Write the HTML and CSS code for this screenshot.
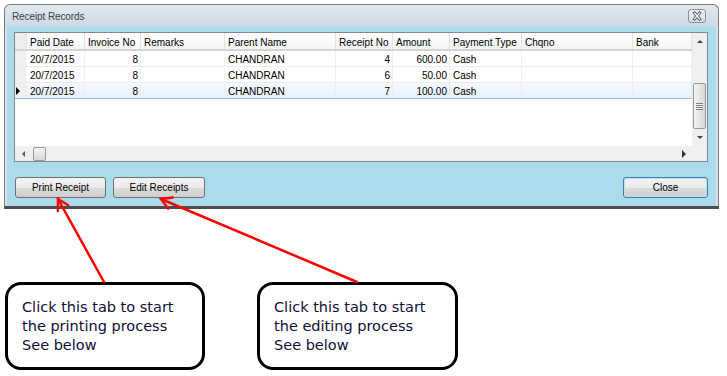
FILE: index.html
```html
<!DOCTYPE html>
<html lang="en">
<head>
    <meta charset="UTF-8">
    <title>Receipt Records</title>
    <link rel="stylesheet" href="styles.css">
</head>
<body>
<div class="page">
    <div class="window">
        <div class="titlebar">
            <span class="title">Receipt Records</span>
            <span class="close-x">
                <svg width="18" height="14" viewBox="0 0 18 14">
                    <path d="M6.5 4 L11.5 10 M11.5 4 L6.5 10" stroke="#4d5560" stroke-width="3" stroke-linecap="square"/>
                    <path d="M6.5 4 L11.5 10 M11.5 4 L6.5 10" stroke="#ffffff" stroke-width="1.2" stroke-linecap="square"/>
                </svg>
            </span>
        </div>
        <div class="client">
            <div class="grid">
                <div class="view">
                    <div class="row head">
                        <div class="cell rh"></div>
                        <div class="cell">Paid Date</div>
                        <div class="cell">Invoice No</div>
                        <div class="cell">Remarks</div>
                        <div class="cell">Parent Name</div>
                        <div class="cell">Receipt No</div>
                        <div class="cell">Amount</div>
                        <div class="cell">Payment Type</div>
                        <div class="cell">Chqno</div>
                        <div class="cell">Bank</div>
                    </div>
                    <div class="row">
                        <div class="cell rh"></div>
                        <div class="cell">20/7/2015</div>
                        <div class="cell num">8</div>
                        <div class="cell"></div>
                        <div class="cell">CHANDRAN</div>
                        <div class="cell num">4</div>
                        <div class="cell num">600.00</div>
                        <div class="cell">Cash</div>
                        <div class="cell"></div>
                        <div class="cell"></div>
                    </div>
                    <div class="row">
                        <div class="cell rh"></div>
                        <div class="cell">20/7/2015</div>
                        <div class="cell num">8</div>
                        <div class="cell"></div>
                        <div class="cell">CHANDRAN</div>
                        <div class="cell num">6</div>
                        <div class="cell num">50.00</div>
                        <div class="cell">Cash</div>
                        <div class="cell"></div>
                        <div class="cell"></div>
                    </div>
                    <div class="row selected">
                        <div class="cell rh"><span class="current"></span></div>
                        <div class="cell">20/7/2015</div>
                        <div class="cell num">8</div>
                        <div class="cell"></div>
                        <div class="cell">CHANDRAN</div>
                        <div class="cell num">7</div>
                        <div class="cell num">100.00</div>
                        <div class="cell">Cash</div>
                        <div class="cell"></div>
                        <div class="cell"></div>
                    </div>
                </div>
                <div class="vscroll">
                    <div class="sb-btn"><span class="arr up"></span></div>
                    <div class="vtrack"><div class="vthumb"><span class="grip"></span></div></div>
                    <div class="sb-btn"><span class="arr down"></span></div>
                </div>
                <div class="hscroll">
                    <div class="hbtn"><span class="arr left"></span></div>
                    <div class="hthumb"></div>
                    <div class="htrack"></div>
                    <div class="hbtn"><span class="arr right"></span></div>
                </div>
                <div class="corner"></div>
            </div>
            <div class="actions">
                <button class="btn btn-print">Print Receipt</button>
                <button class="btn btn-edit">Edit Receipts</button>
                <button class="btn btn-close">Close</button>
            </div>
        </div>
    </div>

    <div class="callouts">
        <div class="callout">Click this tab to start<br>the printing process<br>See below</div>
        <div class="callout">Click this tab to start<br>the editing process<br>See below</div>
    </div>

    <!-- pointers from the notes up to the buttons -->
    <svg class="arrows" width="727" height="376" viewBox="0 0 727 376">
        <g stroke="#ff0000" stroke-width="2.5" fill="none" stroke-linecap="round">
            <path d="M104 282 L58 199"/>
            <path d="M57.8 211 L58 199 L68.3 205.2"/>
            <path d="M357 282 L161 199"/>
            <path d="M168.2 208.6 L161 199 L172.9 197.5"/>
        </g>
    </svg>
</div>
</body>
</html>
```

FILE: styles.css
```css
body {
    margin: 0;
    background: #ffffff;
    font-family: "Liberation Sans", Arial, sans-serif;
}
.page {
    position: relative;
    width: 727px;
    height: 376px;
    overflow: hidden;
}
.window {
    margin: 4px 0 0 4px;
    width: 715px;
    box-sizing: border-box;
    border: 1px solid #787c82;
    border-bottom: 3px solid #4e4e4e;
    border-radius: 6px 6px 0 0;
    padding: 0 2px;
    background: linear-gradient(#e3e9ef, #ccd8e4 22px, #d8e0e8 22px);
}
.titlebar {
    height: 22px;
    display: flex;
    align-items: center;
    justify-content: space-between;
    padding: 0 10px 0 5px;
}
.title {
    font-size: 10px;
    letter-spacing: -0.1px;
    color: #3d4248;
}
.close-x {
    display: block;
    width: 18px;
    height: 14px;
    box-sizing: border-box;
    border: 1px solid #8c939c;
    border-radius: 3px;
    background: linear-gradient(#eef2f6, #d7dee6);
}
.close-x svg {
    display: block;
    margin: -1px;
}
.client {
    height: 179px;
    box-sizing: border-box;
    padding: 5px 8px 0 7px;
    background: #acdbeb;
}
.grid {
    width: 694px;
    height: 130px;
    box-sizing: border-box;
    border: 1px solid #828790;
    background: #ffffff;
    display: grid;
    grid-template-columns: 677px 15px;
    grid-template-rows: 113px 15px;
}
.view {
    overflow: hidden;
}
.row {
    display: grid;
    grid-template-columns: 12px 58px 56px 84px 111px 57px 57px 72px 111px 59px;
    height: 16px;
    box-sizing: border-box;
    border-bottom: 1px solid #ececec;
    font-size: 10px;
    color: #000;
}
.cell {
    padding: 2px 3px 0;
    line-height: 14px;
    white-space: nowrap;
    overflow: hidden;
    border-right: 1px solid #f0f0f0;
}
.num {
    text-align: right;
    padding-right: 2px;
}
.rh {
    padding: 0;
    background: #efefef;
    border-right: 1px solid #f8f8f8;
    display: flex;
    align-items: center;
}
.head {
    height: 18px;
    border-bottom: 2px solid #d4d4d4;
    background: linear-gradient(#ffffff, #f4f5f7);
}
.head .cell {
    padding-top: 3px;
    line-height: 14px;
    border-right: 1px solid #e3e3e3;
}
.head .rh {
    background: #ededed;
}
.selected {
    background: linear-gradient(#f4f9fe, #e8f1fb);
    border-bottom: 1px solid #8cc4f0;
}
.selected .cell {
    border-right-color: #e6eef7;
}
.current {
    display: block;
    margin-left: 1px;
    width: 0;
    height: 0;
    border-top: 4px solid transparent;
    border-bottom: 4px solid transparent;
    border-left: 4px solid #000;
}
.vscroll {
    background: #efefef;
    display: flex;
    flex-direction: column;
}
.sb-btn {
    height: 17px;
    display: flex;
    align-items: center;
    justify-content: center;
}
.vtrack {
    flex: 1;
    padding-top: 33px;
}
.vthumb {
    height: 46px;
    margin: 0 1px;
    box-sizing: border-box;
    border: 1px solid #9a9a9a;
    border-radius: 2px;
    background: linear-gradient(to right, #f4f4f4, #e6e6e6 50%, #d8d8d8);
    display: flex;
    align-items: center;
    justify-content: center;
}
.grip {
    display: block;
    width: 7px;
    height: 7px;
    background: repeating-linear-gradient(#7f7f7f 0 1px, #f2f2f2 1px 2px);
}
.hscroll {
    background: #efefef;
    display: flex;
    align-items: center;
}
.hbtn {
    width: 17px;
    height: 15px;
    display: flex;
    align-items: center;
    justify-content: center;
}
.hthumb {
    width: 13px;
    height: 14px;
    margin-left: 1px;
    box-sizing: border-box;
    border: 1px solid #9a9a9a;
    border-radius: 2px;
    background: linear-gradient(#f4f4f4, #e6e6e6 50%, #d8d8d8);
}
.htrack {
    flex: 1;
}
.corner {
    background: #efefef;
}
.arr {
    display: block;
    width: 0;
    height: 0;
}
.arr.up {
    border-left: 3px solid transparent;
    border-right: 3px solid transparent;
    border-bottom: 3px solid #444;
}
.arr.down {
    border-left: 3px solid transparent;
    border-right: 3px solid transparent;
    border-top: 3px solid #444;
}
.arr.left {
    border-top: 3px solid transparent;
    border-bottom: 3px solid transparent;
    border-right: 3px solid #555;
}
.arr.right {
    border-top: 4px solid transparent;
    border-bottom: 4px solid transparent;
    border-left: 4px solid #333;
}
.actions {
    display: flex;
    gap: 7px;
    margin-top: 15px;
    padding-left: 1px;
}
.btn {
    height: 21px;
    box-sizing: border-box;
    border: 1px solid #707070;
    border-radius: 3px;
    background: linear-gradient(#f3f3f3, #ebebeb 50%, #dddddd 50%, #cfcfcf);
    font-family: "Liberation Sans", Arial, sans-serif;
    font-size: 10px;
    color: #000;
    padding: 0;
}
.btn-print {
    width: 91px;
}
.btn-edit {
    width: 92px;
}
.btn-close {
    width: 85px;
    margin-left: auto;
    border-color: #3c7fb1;
    box-shadow: inset 0 0 0 1px #b6e1f7;
}
.callouts {
    display: flex;
    gap: 52px;
    margin-top: 73px;
    padding-left: 5px;
}
.callout {
    width: 200px;
    height: 88px;
    box-sizing: border-box;
    border: 3px solid #000;
    border-radius: 16px;
    background: #ffffff;
    padding: 13px 0 0 14px;
    font-family: "DejaVu Sans", Verdana, sans-serif;
    font-size: 14.5px;
    line-height: 19px;
    color: #0f0f38;
}
.callout + .callout {
    width: 201px;
}
.arrows {
    position: absolute;
    top: 0;
    left: 0;
    pointer-events: none;
}
```
